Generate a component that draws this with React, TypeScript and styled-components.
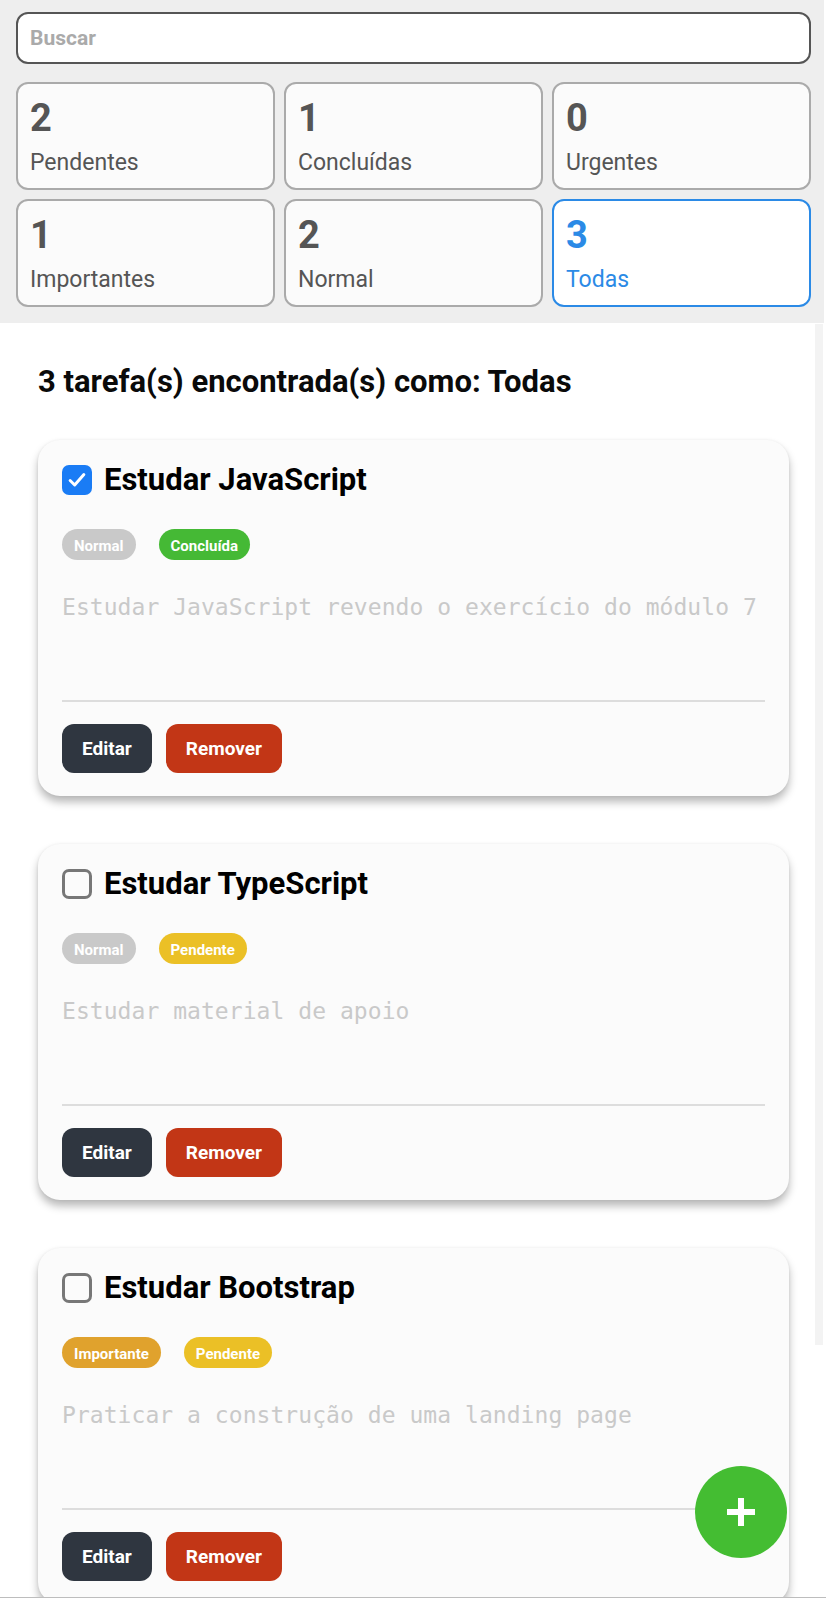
import React from "react";
import styled, { createGlobalStyle } from "styled-components";

const GlobalStyle = createGlobalStyle`
  * { box-sizing: border-box; }
  html, body { margin: 0; padding: 0; background: #ffffff; }
  body { font-family: Roboto, "Noto Sans", Arial, sans-serif; }
`;

const Page = styled.div`
  width: 826px;
  min-height: 1600px;
  position: relative;
  background: #ffffff;
  overflow: hidden;
`;

const TopBar = styled.header`
  width: 824px;
  background: #eeeeee;
  padding: 12px 13px 16px 16px;
  display: flex;
  flex-direction: column;
  gap: 18px;
`;

const SearchInput = styled.input`
  width: 100%;
  height: 52px;
  border: 2px solid #555555;
  border-radius: 12px;
  background: #ffffff;
  padding: 0 12px;
  font-family: Roboto, Arial, sans-serif;
  font-size: 21px;
  font-weight: 700;
  color: #333;
  outline: none;
  &::placeholder { color: #aaaaaa; }
`;

const StatGrid = styled.div`
  display: grid;
  grid-template-columns: repeat(3, 1fr);
  gap: 9px 9px;
`;

const StatCard = styled.button<{ $active?: boolean }>`
  height: 108px;
  border: 2px solid ${(p) => (p.$active ? "#2b8ae6" : "#aaaaaa")};
  border-radius: 12px;
  background: ${(p) => (p.$active ? "#ffffff" : "#fbfbfb")};
  padding: 12px 12px 0 12px;
  display: flex;
  flex-direction: column;
  align-items: flex-start;
  color: ${(p) => (p.$active ? "#2b8ae6" : "#555555")};
  font-family: Roboto, Arial, sans-serif;
  text-align: left;
  cursor: pointer;
`;

const StatNumber = styled.span`
  font-size: 38px;
  line-height: 44px;
  font-weight: 700;
`;

const StatLabel = styled.span`
  margin-top: 10px;
  font-size: 23px;
  line-height: 26px;
  font-weight: 400;
`;

const Main = styled.main`
  padding: 42px 37px 0 38px;
`;

const ResultTitle = styled.h2`
  margin: 0;
  font-size: 31px;
  line-height: 33px;
  font-weight: 700;
  color: #0a0a0a;
`;

const TaskList = styled.div`
  margin-top: 42px;
  display: flex;
  flex-direction: column;
  gap: 48px;
`;

const TaskCard = styled.article`
  background: #fbfbfb;
  border-radius: 22px;
  padding: 24px 24px 23px 24px;
  box-shadow: 0 6px 8px rgba(0, 0, 0, 0.28), 0 0 3px rgba(0, 0, 0, 0.06);
`;

const TitleRow = styled.div`
  display: flex;
  align-items: center;
  gap: 12px;
  height: 31px;
`;

const CheckBox = styled.span<{ $checked?: boolean }>`
  width: 30px;
  height: 30px;
  flex: none;
  border-radius: 7px;
  border: ${(p) => (p.$checked ? "none" : "3px solid #777777")};
  background: ${(p) => (p.$checked ? "#1a7cf5" : "#fbfbfb")};
  display: flex;
  align-items: center;
  justify-content: center;
`;

const TaskTitle = styled.h3`
  margin: 0;
  font-size: 31px;
  line-height: 31px;
  font-weight: 700;
  color: #000000;
`;

const Tags = styled.div`
  margin-top: 34px;
  display: flex;
  gap: 23px;
`;

const Tag = styled.span<{ $color: string }>`
  height: 31px;
  padding: 2px 12px 0 12px;
  border-radius: 16px;
  background: ${(p) => p.$color};
  color: #ffffff;
  font-size: 15px;
  font-weight: 700;
  display: inline-flex;
  align-items: center;
`;

const Description = styled.p`
  margin: 32px 0 0 0;
  min-height: 108px;
  font-family: "DejaVu Sans Mono", "Liberation Mono", monospace;
  font-size: 23px;
  line-height: 30px;
  color: #c9c9c9;
  letter-spacing: 0.05px;
`;

const Divider = styled.hr`
  margin: 0;
  border: none;
  height: 2px;
  background: #dddddd;
`;

const Actions = styled.div`
  margin-top: 22px;
  display: flex;
  gap: 14px;
`;

const ActionButton = styled.button<{ $variant: "edit" | "remove" }>`
  height: 49px;
  padding: 0 20px;
  border: none;
  border-radius: 12px;
  background: ${(p) => (p.$variant === "edit" ? "#2f3640" : "#c23616")};
  color: #ffffff;
  font-family: Roboto, Arial, sans-serif;
  font-size: 19px;
  font-weight: 700;
  cursor: pointer;
`;

const Fab = styled.button`
  position: absolute;
  left: 695px;
  top: 1466px;
  width: 92px;
  height: 92px;
  border-radius: 50%;
  border: none;
  background: #44bd32;
  display: flex;
  align-items: center;
  justify-content: center;
  cursor: pointer;
`;

const ScrollTrack = styled.div`
  position: absolute;
  left: 815px;
  top: 324px;
  width: 8px;
  height: 1021px;
  background: #f3f3f3;
`;

const BottomEdge = styled.div`
  position: absolute;
  left: 0;
  right: 0;
  top: 1597px;
  height: 3px;
  background: #ffffff;
  border-top: 1px solid #bdbdbd;
`;

type Task = {
  title: string;
  done: boolean;
  priority: { label: string; color: string };
  status: { label: string; color: string };
  description: string;
};

const tasks: Task[] = [
  {
    title: "Estudar JavaScript",
    done: true,
    priority: { label: "Normal", color: "#c9c9c9" },
    status: { label: "Concluída", color: "#45b935" },
    description: "Estudar JavaScript revendo o exercício do módulo 7",
  },
  {
    title: "Estudar TypeScript",
    done: false,
    priority: { label: "Normal", color: "#c9c9c9" },
    status: { label: "Pendente", color: "#ebc026" },
    description: "Estudar material de apoio",
  },
  {
    title: "Estudar Bootstrap",
    done: false,
    priority: { label: "Importante", color: "#e0a22d" },
    status: { label: "Pendente", color: "#ebc026" },
    description: "Praticar a construção de uma landing page",
  },
];

const stats = [
  { n: 2, label: "Pendentes" },
  { n: 1, label: "Concluídas" },
  { n: 0, label: "Urgentes" },
  { n: 1, label: "Importantes" },
  { n: 2, label: "Normal" },
  { n: 3, label: "Todas", active: true },
];

export default function App() {
  return (
    <Page>
      <GlobalStyle />
      <TopBar>
        <SearchInput placeholder="Buscar" />
        <StatGrid>
          {stats.map((s) => (
            <StatCard key={s.label} $active={s.active}>
              <StatNumber>{s.n}</StatNumber>
              <StatLabel>{s.label}</StatLabel>
            </StatCard>
          ))}
        </StatGrid>
      </TopBar>
      <Main>
        <ResultTitle>3 tarefa(s) encontrada(s) como: Todas</ResultTitle>
        <TaskList>
          {tasks.map((t) => (
            <TaskCard key={t.title}>
              <TitleRow>
                <CheckBox $checked={t.done}>
                  {t.done && (
                    <svg width="22" height="22" viewBox="0 0 24 24" fill="none">
                      <path d="M4.5 12.5l5 5L19.5 6" stroke="#ffffff" strokeWidth="3.2" strokeLinecap="round" strokeLinejoin="round" />
                    </svg>
                  )}
                </CheckBox>
                <TaskTitle>{t.title}</TaskTitle>
              </TitleRow>
              <Tags>
                <Tag $color={t.priority.color}>{t.priority.label}</Tag>
                <Tag $color={t.status.color}>{t.status.label}</Tag>
              </Tags>
              <Description>{t.description}</Description>
              <Divider />
              <Actions>
                <ActionButton $variant="edit">Editar</ActionButton>
                <ActionButton $variant="remove">Remover</ActionButton>
              </Actions>
            </TaskCard>
          ))}
        </TaskList>
      </Main>
      <ScrollTrack />
      <Fab aria-label="Adicionar">
        <svg width="34" height="34" viewBox="0 0 34 34">
          <path d="M17 3v28M3 17h28" stroke="#ffffff" strokeWidth="6" />
        </svg>
      </Fab>
      <BottomEdge />
    </Page>
  );
}
